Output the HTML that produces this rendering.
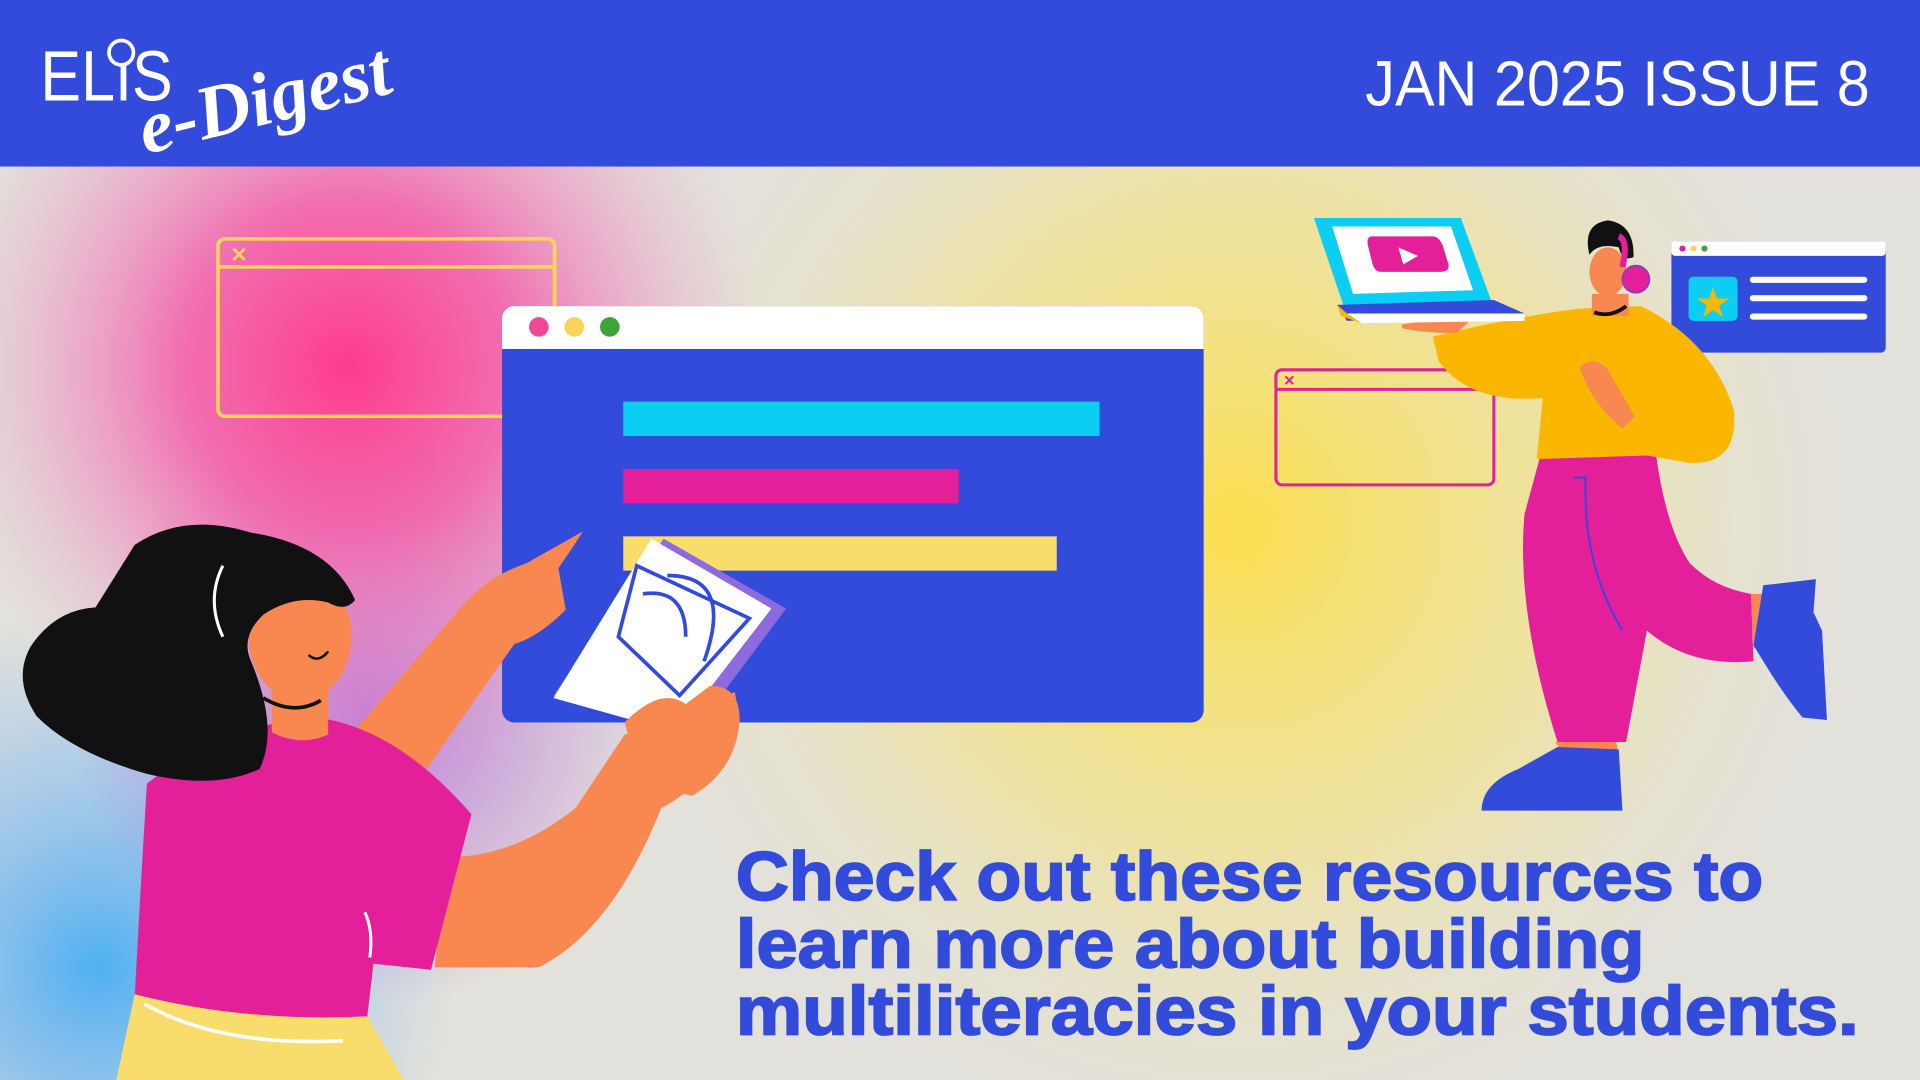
<!DOCTYPE html>
<html><head><meta charset="utf-8"><style>
html,body{margin:0;padding:0;width:1920px;height:1080px;overflow:hidden;background:#e2e1dc}
svg{display:block}
</style></head><body>
<svg width="1920" height="1080" viewBox="0 0 1568 882" xmlns="http://www.w3.org/2000/svg">
<defs>
<radialGradient id="pk" cx="285" cy="300" r="340" gradientUnits="userSpaceOnUse">
<stop offset="0" stop-color="#ff3b8c"/><stop offset="0.4" stop-color="#f45aa8" stop-opacity="0.85"/><stop offset="1" stop-color="#f0a0c8" stop-opacity="0"/></radialGradient>
<radialGradient id="yl" cx="1010" cy="430" r="540" gradientUnits="userSpaceOnUse">
<stop offset="0" stop-color="#fce04f"/><stop offset="0.5" stop-color="#f2e38a" stop-opacity="0.7"/><stop offset="1" stop-color="#e4e2d8" stop-opacity="0"/></radialGradient>
<radialGradient id="bl" cx="80" cy="790" r="290" gradientUnits="userSpaceOnUse">
<stop offset="0" stop-color="#4fb0f2"/><stop offset="0.5" stop-color="#7fbaf0" stop-opacity="0.6"/><stop offset="1" stop-color="#8cc0f0" stop-opacity="0"/></radialGradient>
<radialGradient id="pu" cx="300" cy="580" r="240" gradientUnits="userSpaceOnUse">
<stop offset="0" stop-color="#b66ad8" stop-opacity="0.85"/><stop offset="1" stop-color="#b66ad8" stop-opacity="0"/></radialGradient>
</defs>
<rect x="0" y="136" width="1568" height="746" fill="#e2e1dc"/>
<rect x="0" y="136" width="1568" height="746" fill="url(#yl)"/>
<rect x="0" y="136" width="1568" height="746" fill="url(#bl)"/>
<rect x="0" y="136" width="1568" height="746" fill="url(#pu)"/>
<rect x="0" y="136" width="1568" height="746" fill="url(#pk)"/>

<!-- header -->
<rect x="0" y="0" width="1568" height="136" fill="#334bdb"/>
<text x="33" y="82" font-family="Liberation Sans, sans-serif" font-size="58" font-weight="300" fill="#fff" textLength="108" lengthAdjust="spacingAndGlyphs">ELIS</text>
<circle cx="99" cy="43" r="10" fill="#334bdb" stroke="#fff" stroke-width="3"/>
<text x="110" y="105" transform="rotate(-14 200 80)" font-family="Liberation Serif, serif" font-style="italic" font-weight="bold" font-size="62" fill="#fff">e-Digest</text>
<text x="1527" y="86" text-anchor="end" font-family="Liberation Sans, sans-serif" font-size="52" fill="#fff" textLength="412" lengthAdjust="spacingAndGlyphs">JAN 2025 ISSUE 8</text>

<!-- yellow outline window -->
<rect x="178" y="195" width="275" height="145" rx="6" fill="none" stroke="#f8d45a" stroke-width="3"/>
<line x1="178" y1="218" x2="453" y2="218" stroke="#f8d45a" stroke-width="3"/>
<text x="188" y="214" font-family="Liberation Sans" font-weight="bold" font-size="17" fill="#f8d45a">✕</text>

<!-- main window -->
<rect x="410" y="250" width="573" height="340" rx="10" fill="#334bdb"/>
<path d="M410 285 V260 a10 10 0 0 1 10 -10 H973 a10 10 0 0 1 10 10 V285 Z" fill="#fff"/>
<circle cx="440" cy="267" r="8" fill="#ef4a9a"/>
<circle cx="469" cy="267" r="8" fill="#f8d45a"/>
<circle cx="498" cy="267" r="8" fill="#3fa33a"/>
<rect x="509" y="328" width="389" height="28" fill="#0ccef2"/>
<rect x="509" y="383" width="274" height="28" fill="#e3209a"/>
<rect x="509" y="438" width="354" height="28" fill="#f8dc6c"/>

<!-- pink outline window -->
<rect x="1042" y="302" width="178" height="94" rx="5" fill="none" stroke="#e3209a" stroke-width="2.5"/>
<line x1="1042" y1="318" x2="1220" y2="318" stroke="#e3209a" stroke-width="2.5"/>
<text x="1048" y="315" font-family="Liberation Sans" font-weight="bold" font-size="12" fill="#e3209a">✕</text>

<!-- small blue window -->
<rect x="1365" y="197" width="175" height="91" rx="4" fill="#334bdb"/>
<rect x="1365" y="197" width="175" height="12" rx="3" fill="#fff"/>
<circle cx="1374" cy="203" r="2.5" fill="#e3209a"/><circle cx="1383" cy="203" r="2.5" fill="#f8d45a"/><circle cx="1392" cy="203" r="2.5" fill="#3fa33a"/>
<rect x="1379" y="226" width="40" height="36" rx="4" fill="#0ccef2"/>
<text x="1399" y="259" text-anchor="middle" font-family="DejaVu Sans" font-size="34" fill="#fbb600">★</text>
<rect x="1429" y="226" width="96" height="5" rx="2.5" fill="#fff"/>
<rect x="1429" y="241" width="96" height="5" rx="2.5" fill="#fff"/>
<rect x="1429" y="256" width="96" height="5" rx="2.5" fill="#fff"/>

<!-- man -->
<path d="M1258 372 L1352 368 Q1360 430 1380 460 Q1400 480 1430 485 L1432 540 Q1380 545 1345 515 L1328 606 L1272 606 Q1238 500 1245 420 Z" fill="#e3209a"/>
<path d="M1285 390 L1295 390 Q1292 460 1325 515" fill="none" stroke="#3347db" stroke-width="1.5"/>
<path d="M1430 485 L1445 485 L1440 525 L1432 530 Z" fill="#f98850"/>
<path d="M1270 606 L1320 606 L1322 618 L1280 620 Z" fill="#f98850"/>
<path d="M1272 610 L1322 612 L1325 662 L1210 662 Q1210 640 1240 628 Z" fill="#334bdb"/>
<path d="M1440 478 L1483 473 L1481 500 L1488 515 L1492 588 L1472 586 Q1455 565 1440 540 L1432 527 Z" fill="#334bdb"/>
<path d="M1170 275 Q1240 258 1290 252 L1340 250 Q1398 278 1416 335 Q1420 380 1380 378 L1345 372 L1255 375 L1260 325 Q1200 330 1175 295 Z" fill="#fbb600"/>
<path d="M1290 300 Q1300 290 1312 300 L1335 340 L1325 350 Q1300 330 1290 300 Z" fill="#f98850"/>
<path d="M1300 240 L1330 240 L1330 258 L1300 258 Z" fill="#f98850"/>
<ellipse cx="1313" cy="222" rx="15" ry="20" fill="#f98850"/>
<path d="M1298 208 Q1292 183 1313 180 Q1335 183 1334 210 Q1325 214 1322 202 Q1305 198 1298 208 Z" fill="#111"/>
<path d="M1302 255 Q1315 260 1328 250" stroke="#111" stroke-width="3" fill="none"/>
<circle cx="1336" cy="228" r="11" fill="#e3209a" stroke="#8e39c6" stroke-width="1.5"/>
<path d="M1325 218 Q1330 196 1322 193" stroke="#e3209a" stroke-width="5" fill="none"/>
<path d="M1145 265 Q1170 260 1200 262 L1190 272 Q1160 272 1145 268 Z" fill="#f98850"/>
<path d="M1073 178 L1193 178 L1218 246 L1097 249 Z" fill="#0ccef2"/>
<path d="M1088 185 L1185 185 L1203 237 L1105 240 Z" fill="#fff"/>
<path d="M1120 193 L1170 193 Q1175 193 1178 200 L1183 216 Q1184 222 1176 222 L1128 222 Q1123 222 1121 216 L1117 200 Q1116 193 1120 193 Z" fill="#e3209a"/>
<path d="M1142 202 L1158 209 L1146 216 Z" fill="#fff"/>
<path d="M1092 249 L1220 245 L1245 256 L1100 262 Z" fill="#334bdb"/>
<path d="M1100 256 L1245 256 L1245 262 L1112 264 Z" fill="#fff"/>
<path d="M1092 249 L1100 256 L1112 264 L1095 258 Z" fill="#fbb600"/>

<!-- girl -->
<path d="M290 596 L380 492 Q400 470 430 460 L476 434 Q466 450 456 464 L462 498 Q440 520 420 526 L340 640 Z" fill="#f98850"/>
<path d="M365 700 Q420 700 470 660 L510 600 L560 585 L600 565 Q608 600 585 625 Q560 650 540 660 Q500 760 440 790 L355 790 Z" fill="#f98850"/>
<path d="M542 440 L642 497 L565 600 L452 568 Z" fill="#8e6ae0"/>
<path d="M532 440 L630 497 L552 598 L452 570 Z" fill="#fff"/>
<path d="M520 462 L612 505 L555 568 L505 520 Z" fill="none" stroke="#334bdb" stroke-width="3"/>
<path d="M525 485 Q560 480 560 520 M545 470 Q600 470 575 540" fill="none" stroke="#334bdb" stroke-width="3"/>
<path d="M510 590 Q540 560 560 575 L580 560 Q605 560 604 590 Q600 630 565 650 L525 640 Z" fill="#f98850"/>
<path d="M120 640 Q170 600 250 585 Q320 590 385 665 L352 792 L305 787 L300 830 Q200 835 110 815 Q115 720 120 640 Z" fill="#e3209a"/>
<path d="M110 812 Q200 835 300 830 L330 882 L95 882 Z" fill="#f8dc6c"/>
<path d="M118 820 Q180 855 280 850" fill="none" stroke="#fff" stroke-width="3"/>
<path d="M298 745 Q305 760 302 782" fill="none" stroke="#fff" stroke-width="2.5"/>
<path d="M222 555 L268 555 L268 600 Q245 610 222 598 Z" fill="#f98850"/>
<ellipse cx="245" cy="520" rx="42" ry="52" fill="#f98850"/>
<path d="M110 445 Q150 418 205 435 Q270 445 290 490 Q282 500 268 492 Q240 485 215 502 Q196 520 205 540 Q228 595 212 628 Q175 645 120 632 Q60 615 30 585 Q10 555 25 528 Q45 498 78 496 Z" fill="#111"/>
<path d="M215 570 Q240 585 262 572" fill="none" stroke="#111" stroke-width="3"/>
<path d="M252 535 Q260 542 268 532" fill="none" stroke="#111" stroke-width="2"/>
<path d="M182 462 Q168 490 182 520" fill="none" stroke="#fff" stroke-width="2.5"/>

<!-- caption -->
<g font-family="Liberation Sans, sans-serif" font-weight="bold" font-size="56" fill="#334bdb" stroke="#334bdb" stroke-width="1.5">
<text x="601" y="735" textLength="839" lengthAdjust="spacingAndGlyphs">Check out these resources to</text>
<text x="601" y="790" textLength="742" lengthAdjust="spacingAndGlyphs">learn more about building</text>
<text x="601" y="845" textLength="917" lengthAdjust="spacingAndGlyphs">multiliteracies in your students.</text>
</g>
</svg>
</body></html>
